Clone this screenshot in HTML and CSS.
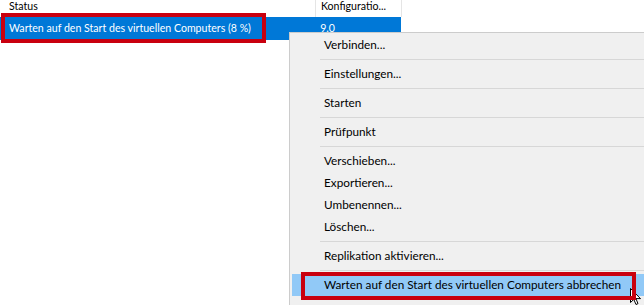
FILE: index.html
```html
<!DOCTYPE html>
<html lang="de">
<head>
    <meta charset="UTF-8">
    <title>Virtuelle Computer</title>
    <link rel="stylesheet" href="styles.css">
</head>
<body>
    <div class="vm-list">
        <div class="vm-head">
            <div class="col col-status">Status</div>
            <div class="col col-config">Konfiguratio...</div>
        </div>
        <div class="vm-row selected">
            <div class="col col-status">Warten auf den Start des virtuellen Computers (8 %)</div>
            <div class="col col-config">9.0</div>
        </div>
    </div>

    <div class="mark mark-row"></div>

    <ul class="context-menu">
        <li class="item">Verbinden...</li>
        <li class="sep"></li>
        <li class="item">Einstellungen...</li>
        <li class="sep"></li>
        <li class="item">Starten</li>
        <li class="sep"></li>
        <li class="item">Prüfpunkt</li>
        <li class="sep"></li>
        <li class="item">Verschieben...</li>
        <li class="item">Exportieren...</li>
        <li class="item">Umbenennen...</li>
        <li class="item">Löschen...</li>
        <li class="sep"></li>
        <li class="item">Replikation aktivieren...</li>
        <li class="sep"></li>
        <li class="item hover">Warten auf den Start des virtuellen Computers abbrechen</li>
    </ul>

    <svg class="cursor" width="12" height="18" viewBox="0 0 12 18">
        <path d="M0.5 0.5 L0.5 14.5 L3.8 11.4 L6 16.5 L8 15.6 L5.9 10.6 L10.5 10.6 Z" fill="#fff" stroke="#000" stroke-width="1"/>
    </svg>

    <div class="mark mark-item"></div>
</body>
</html>
```

FILE: styles.css
```css
* {
    margin: 0;
    padding: 0;
    box-sizing: border-box;
}

body {
    font-family: 'Lato', 'Liberation Sans', sans-serif;
    font-size: 11.75px;
    color: #000;
    background: #fff;
    width: 644px;
    height: 305px;
    overflow: hidden;
    position: relative;
}

/* list of virtual machines */
.vm-list {
    font-size: 10.6px;
}

.vm-head,
.vm-row {
    display: flex;
}

.vm-head {
    height: 17px;
    line-height: 13px;
}

.vm-head .col {
    border-right: 1px solid #e5e5e5;
    padding-left: 9px;
}

.vm-row {
    height: 23px;
    line-height: 23px;
    width: 401px;
}

.vm-row .col {
    padding-left: 9px;
}

.col-status {
    width: 316px;
    white-space: nowrap;
}

.col-config {
    width: 86px;
    padding-left: 5px !important;
}

.vm-row.selected {
    background: #0078d7;
    color: #fff;
}

/* red annotation frames */
.mark {
    position: absolute;
    border: 4px solid #c9000f;
}

.mark-row {
    left: 1px;
    top: 13px;
    width: 265px;
    height: 30px;
}

.mark-item {
    left: 301px;
    top: 272px;
    width: 335px;
    height: 28px;
}

/* context menu */
.context-menu {
    position: absolute;
    left: 289px;
    top: 32px;
    right: 0;
    bottom: 0;
    list-style: none;
    background: #f0f0f0;
    border-left: 1px solid #cccccc;
    border-top: 1px solid #cccccc;
    padding: 1px 0 0 2px;
}

.item {
    height: 22px;
    line-height: 22px;
    padding-left: 32px;
    white-space: nowrap;
}

.item.hover {
    background: #91c9f7;
}

.sep {
    height: 7px;
    padding-top: 3px;
    margin-left: 28px;
}

.sep::before {
    content: '';
    display: block;
    height: 1px;
    background: #d7d7d7;
}

.cursor {
    position: absolute;
    left: 630px;
    top: 288px;
}
```
